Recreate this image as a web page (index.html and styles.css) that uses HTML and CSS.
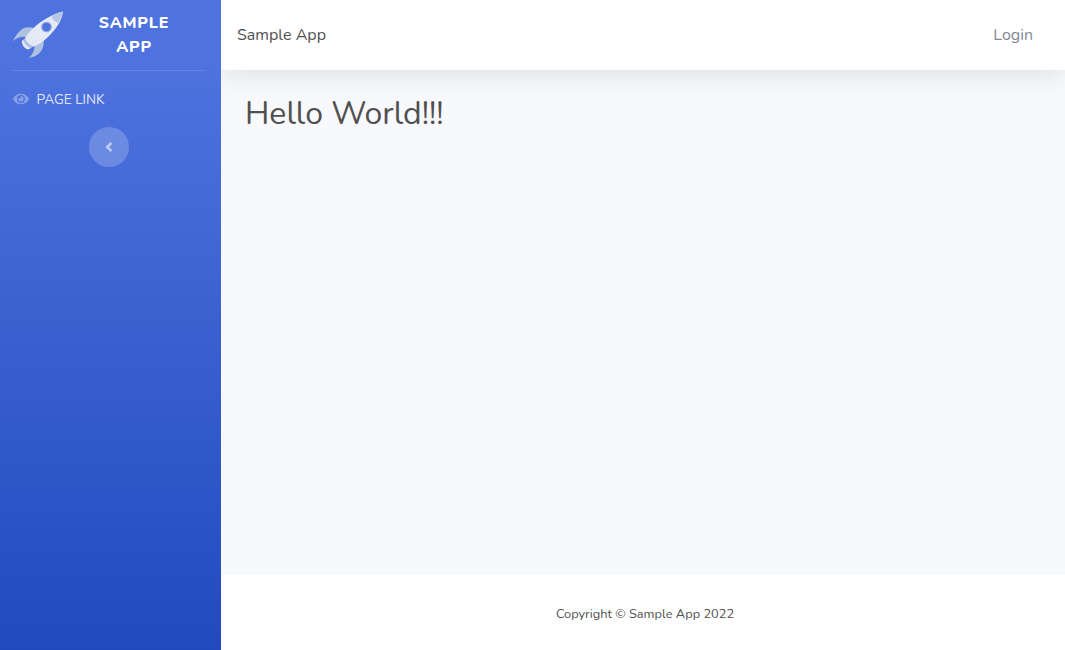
FILE: index.html
```html
<!DOCTYPE html>
<html lang="en">
<head>
<meta charset="utf-8">
<title>Sample App</title>
<link rel="stylesheet" href="styles.css">
</head>
<body>
<div class="wrapper">
  <nav class="sidebar">
    <a class="brand">
      <svg class="rocket" viewBox="0 0 52 50" width="52" height="50">
        <path class="fin" d="M22 17C17 15.500 12 16 9 19C5 22 3 26 1 30C5 27 9 25 14 26ZM31.500 28.500C32.500 35 30 41 25 44C22 46 19 46 17 47C20 44 23 39 22.500 34Z"/>
        <path class="hull" d="M51 .5C42 2.500 30 9 21.500 17C17 21 14 25 12 29L19 36.500C25 34.500 31 31 36 26C43.500 19 50 9.500 51 .5Z"/>
        <path class="nose" d="M51 .5C47 1.300 43 3 39.500 4.800C40 8 43 11.500 46 11.800C48.500 8 50.500 4 51 .5Z"/>
        <path class="hull" d="M11.500 28.500L9.800 30C10 34 12.500 37.500 16 38.500L19 37Z"/>
        <path class="band" d="M13.200 27C14 30.500 17 33.700 21.500 35.300L18.500 37C15 36 12.200 33 11.300 29.300Z"/>
        <circle class="ring" cx="34.500" cy="16" r="4.700"/>
      </svg>
      <span class="brand-text">Sample App</span>
    </a>
    <hr class="divider">
    <a class="nav-link">
      <svg class="eye" viewBox="0 0 576 512" width="16" height="14"><path d="M572.52 241.4C518.29 135.59 410.93 64 288 64S57.68 135.64 3.48 241.41a32.35 32.35 0 0 0 0 29.19C57.71 376.41 165.07 448 288 448s230.32-71.64 284.52-177.41a32.35 32.35 0 0 0 0-29.19zM288 400a144 144 0 1 1 144-144 143.93 143.93 0 0 1-144 144zm0-240a95.31 95.31 0 0 0-25.31 3.79 47.85 47.85 0 0 1-66.9 66.9A95.78 95.78 0 1 0 288 160z"/></svg>
      <span class="link-text">PAGE LINK</span>
    </a>
    <button class="toggle" aria-label="Collapse">
      <svg viewBox="0 0 8 16" width="8" height="16"><path d="M6.400 3.800L2.200 8L6.400 12.200"/></svg>
    </button>
  </nav>
  <div class="content">
    <header class="topbar"><span class="title">Sample App</span><a class="login">Login</a></header>
    <main class="main"><h1 class="heading">Hello World!!!</h1></main>
    <footer class="footer"><span class="copyright">Copyright © Sample App 2022</span></footer>
  </div>
</div>
</body>
</html>
```
FILE: styles.css
```css
* { box-sizing: border-box; }
body { margin: 0; font-family: Nunito, Lato, sans-serif; font-size: 16px; line-height: 1.5; color: #505050; }
.wrapper { display: flex; height: 650px; overflow: hidden; }
.sidebar { width: 221px; flex: none; display: flex; flex-direction: column; background: linear-gradient(180deg, #4e73df 10%, #224abe 100%); }
.brand { display: flex; height: 70px; padding: 11px 13px 0 12px; color: #fff; }
.rocket { flex: none; }
.fin, .band { fill: #afc1e2; }
.nose { fill: #b7c6e4; }
.hull { fill: #e5e9f5; }
.ring { fill: #4e73df; stroke: #8ea4dc; stroke-width: 1.3; }
.brand-text { width: 74px; margin-left: 33px; font-weight: 800; text-transform: uppercase; text-align: center; letter-spacing: 0.8px; }
.divider { margin: 0 15px 0 13px; border: 0; border-top: 1px solid rgba(255,255,255,.15); width: 192px; }
.nav-link { display: flex; align-items: center; gap: 7.5px; height: 20px; margin: 18px 0 0 13px; font-size: 13.6px; color: rgba(255,255,255,.85); }
.link-text { padding-top: 2px; }
.eye { fill: rgba(255,255,255,.34); }
.toggle { display: flex; align-items: center; justify-content: center; width: 40px; height: 40px; margin: 18px 0 0 89px; padding: 0; border: 0; border-radius: 50%; background: rgba(255,255,255,.2); }
.toggle svg { fill: none; stroke: rgba(255,255,255,.55); stroke-width: 2.6; }
.content { flex: 1; display: flex; flex-direction: column; background: #f8f9fc; overflow: hidden; }
.topbar { display: flex; justify-content: space-between; align-items: center; height: 70px; padding: 0 32px 0 16px; background: #fff; box-shadow: 0 2.4px 28px 0 rgba(58,59,69,.15); }
.login { color: #858796; }
.main { flex: 1; padding: 25px 24px 24px; }
.heading { margin: 0; font-size: 32px; font-weight: 400; line-height: 38px; }
.footer { display: flex; align-items: center; justify-content: center; height: 75px; padding: 4px 0 0 4px; background: #fff; }
.copyright { font-size: 12.8px; }
```
